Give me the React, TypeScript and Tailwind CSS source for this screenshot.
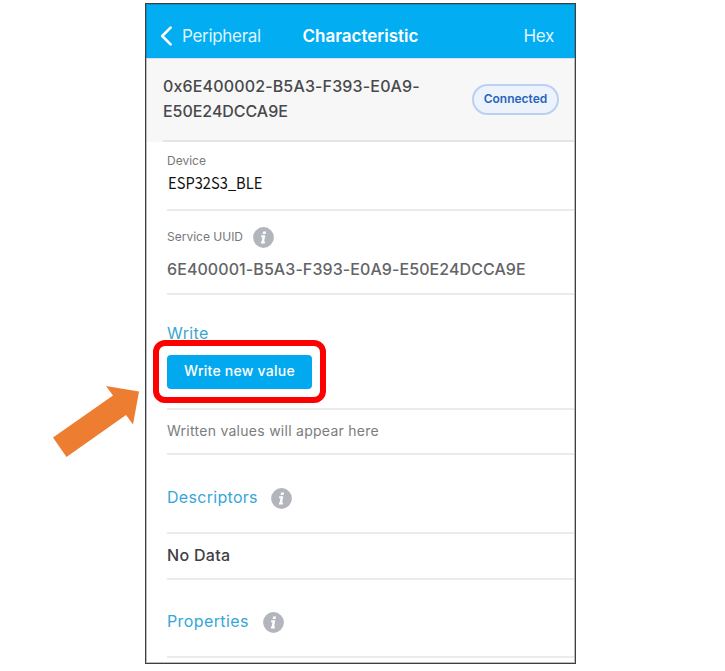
import type { ReactNode } from "react";

function InfoIcon() {
  return (
    <svg width="21" height="21" viewBox="0 0 21 21" aria-hidden="true" className="block shrink-0">
      <circle cx="10.5" cy="10.5" r="10.4" fill="#b2b6bc" />
      <path d="M10.2 4.4h2.9l-.6 2.5H9.6z" fill="#fff" />
      <path d="M8.3 8.3h4l-1.2 6.200h1l-.4 1.900H7.800l.3-1.900h.6l.8-4.300H8z" fill="#fff" />
    </svg>
  );
}

function Row({ className, children }: { className: string; children: ReactNode }) {
  return (
    <section className={`ml-[20px] box-border shrink-0 border-b-2 border-[#ebebec] ${className}`}>
      {children}
    </section>
  );
}

export default function App() {
  return (
    <main className="relative h-[671px] w-[725px] overflow-hidden bg-white pt-[3px] pl-[145px] font-['Inter',sans-serif] whitespace-nowrap">
      <div className="flex h-[661px] w-[431px] flex-col border border-[#3d3f42] bg-white">
        <div className="flex h-full flex-col border-r border-b border-l border-[#b9bbbd]">
          <header className="-mx-px grid h-[54px] shrink-0 grid-cols-3 items-center border-x border-t border-[#0b8fc6] bg-[#03adf2] pt-[8px] text-[17px] leading-[24px] text-[#dff5ff]">
            <div className="flex items-center pl-[13px]">
              <svg width="13" height="20" viewBox="0 0 13 20" fill="none" stroke="#fff" strokeWidth="2.6" strokeLinecap="round" strokeLinejoin="round" aria-hidden="true">
                <path d="M10.600 1.600 2.200 10l8.400 8.400" />
              </svg>
              <span className="ml-[9px] tracking-[-0.3px]">Peripheral</span>
            </div>
            <h1 className="text-center font-semibold text-white">Characteristic</h1>
            <div className="pr-[20px] text-right tracking-[-0.3px]">Hex</div>
          </header>

          <section className="flex h-[84px] shrink-0 flex-col bg-[#f7f7f8]">
            <div className="flex h-[82px] justify-between border-t border-[#d9dfe3] pr-[15px] pl-[16px]">
              <p className="pt-[15px] text-[16px] leading-[25px] font-medium tracking-[0.15px] text-[#48494b]">
                0x6E400002-B5A3-F393-E0A9-
                <br />
                <span className="tracking-[-0.05px]">E50E24DCCA9E</span>
              </p>
              <span className="mt-[25px] h-[31px] w-[87px] rounded-full border-2 border-[#bad0f2] bg-[#edf3fc] text-center text-[12px] leading-[26px] font-semibold text-[#2864b8]">
                Connected
              </span>
            </div>
            <div className="ml-[16px] h-[2px] bg-[#e4e5e6]" />
          </section>

          <Row className="h-[69px] pt-[9px]">
            <div className="text-[12px] leading-[19px] text-[#77787a]">Device</div>
            <div className="ml-[1px] w-max origin-left scale-x-[0.89] font-['Noto_Sans_CJK_SC',sans-serif] text-[16.5px] leading-[25px] font-normal text-[#111]">ESP32S3_BLE</div>
          </Row>

          <Row className="h-[84px] pt-[16px]">
            <div className="flex h-[21px] items-center text-[12px] text-[#77787a]">
              <span className="w-[86px] pb-[2px]">Service UUID</span>
              <InfoIcon />
            </div>
            <div className="mt-[9px] text-[16px] leading-[25px] font-medium tracking-[0.08px] text-[#636466]">6E400001-B5A3-F393-E0A9-E50E24DCCA9E</div>
          </Row>

          <Row className="h-[115px] pt-[26px]">
            <h2 className="text-[16px] leading-[25px] tracking-[0.4px] text-[#3ba5d0]">Write</h2>
            <button className="mt-[9px] block h-[34px] w-[145px] rounded-[4px] bg-[#03a9ef] pb-[3px] text-[14px] leading-[21px] font-medium tracking-[0.25px] text-white">
              Write new value
            </button>
          </Row>

          <Row className="h-[45px] pt-[10px]">
            <div className="text-[14px] leading-[22px] tracking-[0.27px] text-[#7b7c7e]">Written values will appear here</div>
          </Row>

          <Row className="h-[79px] pt-[31px]">
            <div className="flex h-[24px] items-center text-[16px] tracking-[0.3px] text-[#35a6d7]">
              <span className="w-[104px] pb-[2px]">Descriptors</span>
              <InfoIcon />
            </div>
          </Row>

          <Row className="h-[46px] pt-[9px]">
            <div className="text-[16px] leading-[24px] font-medium tracking-[0.3px] text-[#3f4042]">No Data</div>
          </Row>

          <Row className="h-[78px] pt-[30px]">
            <div className="flex h-[24px] items-center text-[16px] tracking-[0.4px] text-[#35a6d7]">
              <span className="w-[96px] pb-[2px]">Properties</span>
              <InfoIcon />
            </div>
          </Row>
        </div>
      </div>

      {/* Callout around the write button */}
      <div className="absolute top-[340px] left-[153px] h-[63px] w-[173px] rounded-[12px] border-6 border-[#ff0000]" />
      <svg className="absolute top-[380px] left-[48px]" width="96" height="82" viewBox="48 380 96 82" aria-hidden="true">
        <path d="M53 437.5 113 395.5 106 386 139 391.5 133 424.5 126 415 66.500 457z" fill="#ed7d31" />
      </svg>
    </main>
  );
}
